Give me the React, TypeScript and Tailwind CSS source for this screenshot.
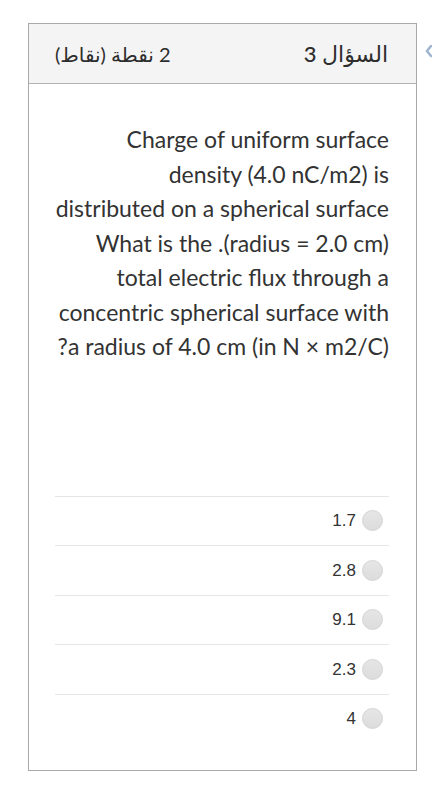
import React from "react";

const lines = [
  "Charge of uniform surface",
  "density (4.0 nC/m2) is",
  "distributed on a spherical surface",
  "What is the .(radius = 2.0 cm)",
  "total electric flux through a",
  "concentric spherical surface with",
  "?a radius of 4.0 cm (in N × m2/C)",
];

const options = ["1.7", "2.8", "9.1", "2.3", "4"];

export default function App() {
  return (
    <div className="relative w-[432px] h-[798px] bg-white overflow-hidden">
      <div className="ml-[28px] mt-[23px] w-[389px] h-[748px] border border-[#a9a9a9] flex flex-col">
        <div
          dir="rtl"
          className="h-[60px] shrink-0 bg-[#f4f4f4] border-b border-[#b3b3b3] flex items-center justify-between pr-[28px] pl-[26px] text-[#2d2d2d]"
          style={{ fontFamily: 'Lato, "DejaVu Sans", sans-serif' }}
        >
          <span className="text-[22px] font-medium">السؤال 3</span>
          <span className="text-[20px]">2 نقطة (نقاط)</span>
        </div>
        <div
          className="pt-[38px] pr-[27px] pl-[20px] text-right text-[23px] leading-[34.5px] text-[#333]"
          style={{ fontFamily: 'Lato, "Liberation Sans", sans-serif' }}
        >
          {lines.map((l) => (
            <div key={l} className="whitespace-nowrap">
              {l}
            </div>
          ))}
        </div>
        <div className="mt-[132px] ml-[26px] mr-[27px]">
          {options.map((o) => (
            <div
              key={o}
              className="h-[49.5px] border-t border-[#e6e6e6] flex items-center justify-end gap-[6px] pr-[6px]"
            >
              <span
                className="text-[17px] text-[#333]"
                style={{ fontFamily: '"Liberation Sans", Arial, sans-serif' }}
              >
                {o}
              </span>
              <span className="w-[21px] h-[21px] rounded-full border border-[#d3d3d3] bg-gradient-to-b from-[#e6e6e6] to-[#dcdcdc]" />
            </div>
          ))}
        </div>
      </div>
      <svg
        className="absolute left-[424px] top-[44px]"
        width="10"
        height="14"
        viewBox="0 0 10 14"
      >
        <path d="M7 2 L3 7 L7 12" fill="none" stroke="#9fb4cf" strokeWidth="2.5" strokeLinecap="round" />
      </svg>
    </div>
  );
}
